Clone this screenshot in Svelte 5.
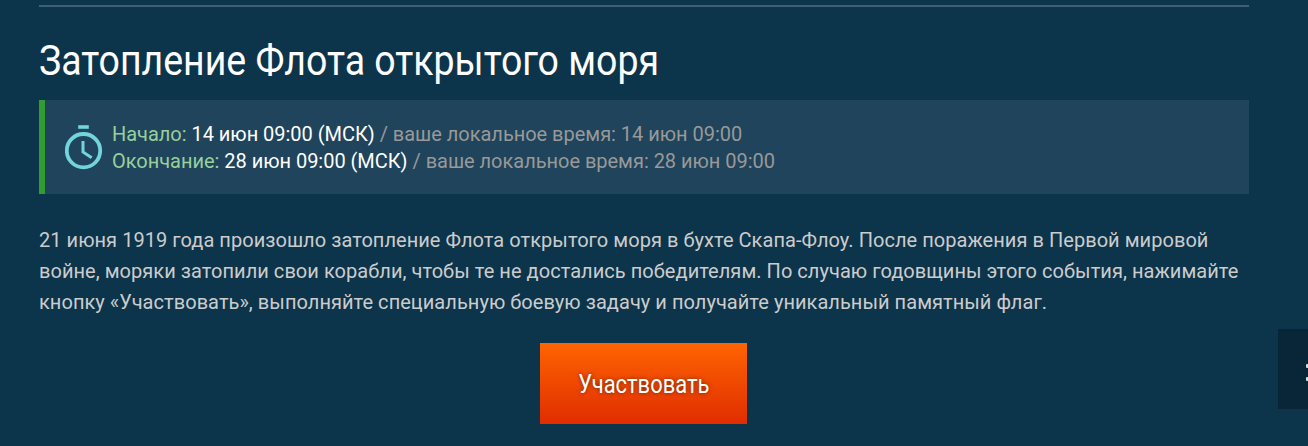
<script lang="ts">
  type EventDate = {
    label: string;
    server: string;
    local: string;
  };

  const title = "Затопление Флота открытого моря";
  const dates: EventDate[] = [
    { label: "Начало:", server: "14 июн 09:00 (МСК)", local: "14 июн 09:00" },
    { label: "Окончание:", server: "28 июн 09:00 (МСК)", local: "28 июн 09:00" },
  ];
</script>

<div class="page">
  <main class="article">
    <h1><span>{title}</span></h1>

    <section class="schedule">
      <svg class="timer" viewBox="0 0 38 46" aria-hidden="true">
        <path d="M13.2 3h10.6" stroke-width="3.6" />
        <circle cx="18.5" cy="26.7" r="16.7" stroke-width="3.8" />
        <path d="M18 17v11l8.7 5.8" stroke-width="3" />
      </svg>
      <div class="dates">
        {#each dates as date}
          <p>
            <span class="label">{date.label}</span>
            <span class="server">{date.server}</span>
            / ваше локальное время: {date.local}
          </p>
        {/each}
      </div>
    </section>

    <p class="description">
      21 июня 1919 года произошло затопление Флота открытого моря в бухте Скапа-Флоу. После поражения в Первой мировой<br />
      войне, моряки затопили свои корабли, чтобы те не достались победителям. По случаю годовщины этого события, нажимайте<br />
      кнопку «Участвовать», выполняйте специальную боевую задачу и получайте уникальный памятный флаг.
    </p>

    <button class="join" type="button"><span>Участвовать</span></button>
  </main>

  <aside class="side-tab">
    <span></span>
    <span></span>
  </aside>
</div>

<style>
  :global(body) {
    margin: 0;
    background: #0c344b;
  }

  .page {
    position: relative;
    box-sizing: border-box;
    height: 446px;
    padding: 5px 59px 0 39px;
    overflow: hidden;
    background: #0c344b;
    font-family: Roboto, sans-serif;
  }

  .article {
    border-top: 2px solid #405d77;
  }

  h1 {
    height: 93px;
    margin: 0;
    color: #fff;
    font-size: 43px;
    font-weight: 400;
    line-height: 106px;
    white-space: nowrap;
  }

  h1 span {
    display: inline-block;
    transform: scaleX(0.871);
    transform-origin: left;
  }

  .schedule {
    display: flex;
    box-sizing: border-box;
    height: 94px;
    padding: 21px 20px 19px;
    border-left: 6px solid #329b32;
    background: #1f445b;
  }

  .timer {
    width: 38px;
    height: 46px;
    margin: 3px 9px 0 0;
    fill: none;
    stroke: #74d4dc;
  }

  .dates p {
    margin: 0;
    color: #999;
    font-size: 20px;
    letter-spacing: -0.025px;
    line-height: 27px;
    white-space: nowrap;
  }

  .dates .label {
    color: #98d09b;
  }

  .dates .server {
    color: #fff;
  }

  .description {
    margin: 31px 0 0;
    color: #ccc;
    font-size: 20px;
    letter-spacing: 0.045px;
    line-height: 31px;
    white-space: nowrap;
  }

  .join {
    display: block;
    width: 207px;
    height: 81px;
    margin: 25px 0 0 501px;
    padding: 1px 0 0;
    border: 0;
    background: linear-gradient(#ff6400, #e02d00);
    color: #fff;
    font-family: inherit;
    font-size: 25px;
    text-shadow: 0 0 5px rgba(0, 0, 0, 0.5);
  }

  .join span {
    display: inline-block;
    transform: scaleX(0.877);
  }

  .side-tab {
    position: absolute;
    top: 329px;
    right: 0;
    display: flex;
    flex-direction: column;
    gap: 9px;
    box-sizing: border-box;
    width: 30px;
    height: 80px;
    padding: 35px 0 0 28px;
    overflow: hidden;
    background: #082638;
  }

  .side-tab span {
    flex: none;
    width: 4px;
    height: 4px;
    border-radius: 1px;
    background: #d5dce0;
  }
</style>
